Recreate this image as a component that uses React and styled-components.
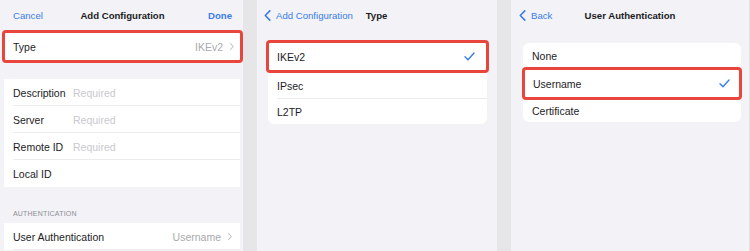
import React from 'react'
import styled, { createGlobalStyle, css } from 'styled-components';

const Global = createGlobalStyle`
    html, body {
        margin:0;
        padding:0;
        background:#e6e6e9;
    }
    body {
        font-family:"Liberation Sans", Arial, sans-serif;
        color:#1c1c1e;
        -webkit-font-smoothing:antialiased;
    }
`

const blue = '#3a7de8';
const red = '#e8463c';

const Page = styled.div`
    display:flex;
    gap:14px;
    width:750px;
    height:251px;
    overflow:hidden;
    background:#e6e6e9;
`

const Panel = styled.div`
    width:${p => p.$w}px;
    flex-shrink:0;
    height:100%;
    background:#f2f2f7;
    display:flex;
    flex-direction:column;
    padding:${p => p.$pad || '0'};
    box-sizing:border-box;
    overflow:hidden;
`

const Nav = styled.div`
    height:30px;
    flex-shrink:0;
    display:grid;
    grid-template-columns:1fr auto 1fr;
    align-items:center;
    padding:${p => p.$pad || '0'};
    font-size:9.6px;
`

const NavLink = styled.div`
    color:${blue};
    display:flex;
    align-items:center;
    gap:5px;
    font-weight:${p => (p.$bold ? 700 : 400)};
    justify-self:${p => (p.$end ? 'end' : 'start')};
    white-space:nowrap;
`

const Title = styled.div`
    font-weight:700;
    font-size:9.6px;
    color:#1c1c1e;
    white-space:nowrap;
`

const Highlight = styled.div`
    border:3px solid ${red};
    border-radius:4px;
    background:#fff;
    margin:${p => p.$m || '0'};
    position:relative;
    z-index:1;
`

const Group = styled.div`
    background:#fff;
    margin-top:${p => p.$top || 0}px;
`

const Card = styled.div`
    background:#fff;
    border-radius:6px;
    margin:${p => p.$m};
    display:flex;
    flex-direction:column;
`

const Row = styled.div`
    height:${p => p.$h || 27}px;
    display:flex;
    align-items:center;
    padding:0 ${p => p.$pr || 8}px 0 ${p => p.$pl || 9}px;
    font-size:10.5px;
    position:relative;
    ${p => p.$line && css`
        &::after {
            content:'';
            position:absolute;
            left:${p.$pl || 9}px;
            right:0;
            bottom:0;
            height:1px;
            background:#ececf0;
        }
    `}
`

const Label = styled.span`
    width:${p => (p.$w ? `${p.$w}px` : 'auto')};
    flex-shrink:0;
    white-space:nowrap;
`

const Placeholder = styled.span`
    color:#c9c9ce;
`

const Value = styled.span`
    margin-left:auto;
    color:#a9a9ae;
    display:flex;
    align-items:center;
    gap:7px;
`

const SectionHead = styled.div`
    height:36px;
    display:flex;
    align-items:flex-end;
    padding:0 0 6px 9px;
    box-sizing:border-box;
    font-size:7px;
    letter-spacing:0.2px;
    color:#8e8e93;
`

const Chevron = () => (
    <svg width="4" height="7" viewBox="0 0 4 7">
        <path d="M0.6 0.6 L3.3 3.5 L0.6 6.4" fill="none" stroke="#c4c4c8" strokeWidth="1.1" strokeLinecap="round" strokeLinejoin="round" />
    </svg>
)

const Back = () => (
    <svg width="7" height="11" viewBox="0 0 7 11">
        <path d="M5.8 0.9 L1.3 5.5 L5.8 10.1" fill="none" stroke={blue} strokeWidth="1.6" strokeLinecap="round" strokeLinejoin="round" />
    </svg>
)

const Check = () => (
    <svg width="11" height="9" viewBox="0 0 11 9" style={{ marginLeft: 'auto' }}>
        <path d="M1 4.8 L4 7.8 L10 1" fill="none" stroke={blue} strokeWidth="1.4" strokeLinecap="round" strokeLinejoin="round" />
    </svg>
)

const App = () => {
  return (
    <>
    <Global />
    <Page>
        <Panel $w={243} $pad="0 3px 0 4px">
            <Nav $pad="0 8px 0 9px">
                <NavLink>Cancel</NavLink>
                <Title>Add Configuration</Title>
                <NavLink $bold $end>Done</NavLink>
            </Nav>
            <Highlight $m="0 -3px 0 -2px">
                <Row $pl={8} $pr={6}>
                    <Label>Type</Label>
                    <Value>IKEv2 <Chevron /></Value>
                </Row>
            </Highlight>
            <Group $top={16}>
                <Row $line><Label $w={60}>Description</Label><Placeholder>Required</Placeholder></Row>
                <Row $line><Label $w={60}>Server</Label><Placeholder>Required</Placeholder></Row>
                <Row $line><Label $w={60}>Remote ID</Label><Placeholder>Required</Placeholder></Row>
                <Row><Label $w={60}>Local ID</Label></Row>
            </Group>
            <SectionHead>AUTHENTICATION</SectionHead>
            <Group>
                <Row $line $pr={8}>
                    <Label>User Authentication</Label>
                    <Value>Username <Chevron /></Value>
                </Row>
            </Group>
        </Panel>

        <Panel $w={240}>
            <Nav $pad="0 8px 0 7px">
                <NavLink><Back />Add Configuration</NavLink>
                <Title>Type</Title>
                <span />
            </Nav>
            <Card $m="10px 10px 0 11px">
                <Highlight $m="0 -2px">
                    <Row $pl={8} $pr={11}>IKEv2<Check /></Row>
                </Highlight>
                <Row $line $h={26}>IPsec</Row>
                <Row $h={25}>L2TP</Row>
            </Card>
        </Panel>

        <Panel $w={238}>
            <Nav $pad="0 8px 0 8px">
                <NavLink><Back />Back</NavLink>
                <Title>User Authentication</Title>
                <span />
            </Nav>
            <Card $m="13px 8px 0 12px">
                <Row $h={25}>None</Row>
                <Highlight $m="-1px -1px 0">
                    <Row $pl={8} $pr={9}>Username<Check /></Row>
                </Highlight>
                <Row $h={22}>Certificate</Row>
            </Card>
        </Panel>
    </Page>
    </>
  )
}

export default App
